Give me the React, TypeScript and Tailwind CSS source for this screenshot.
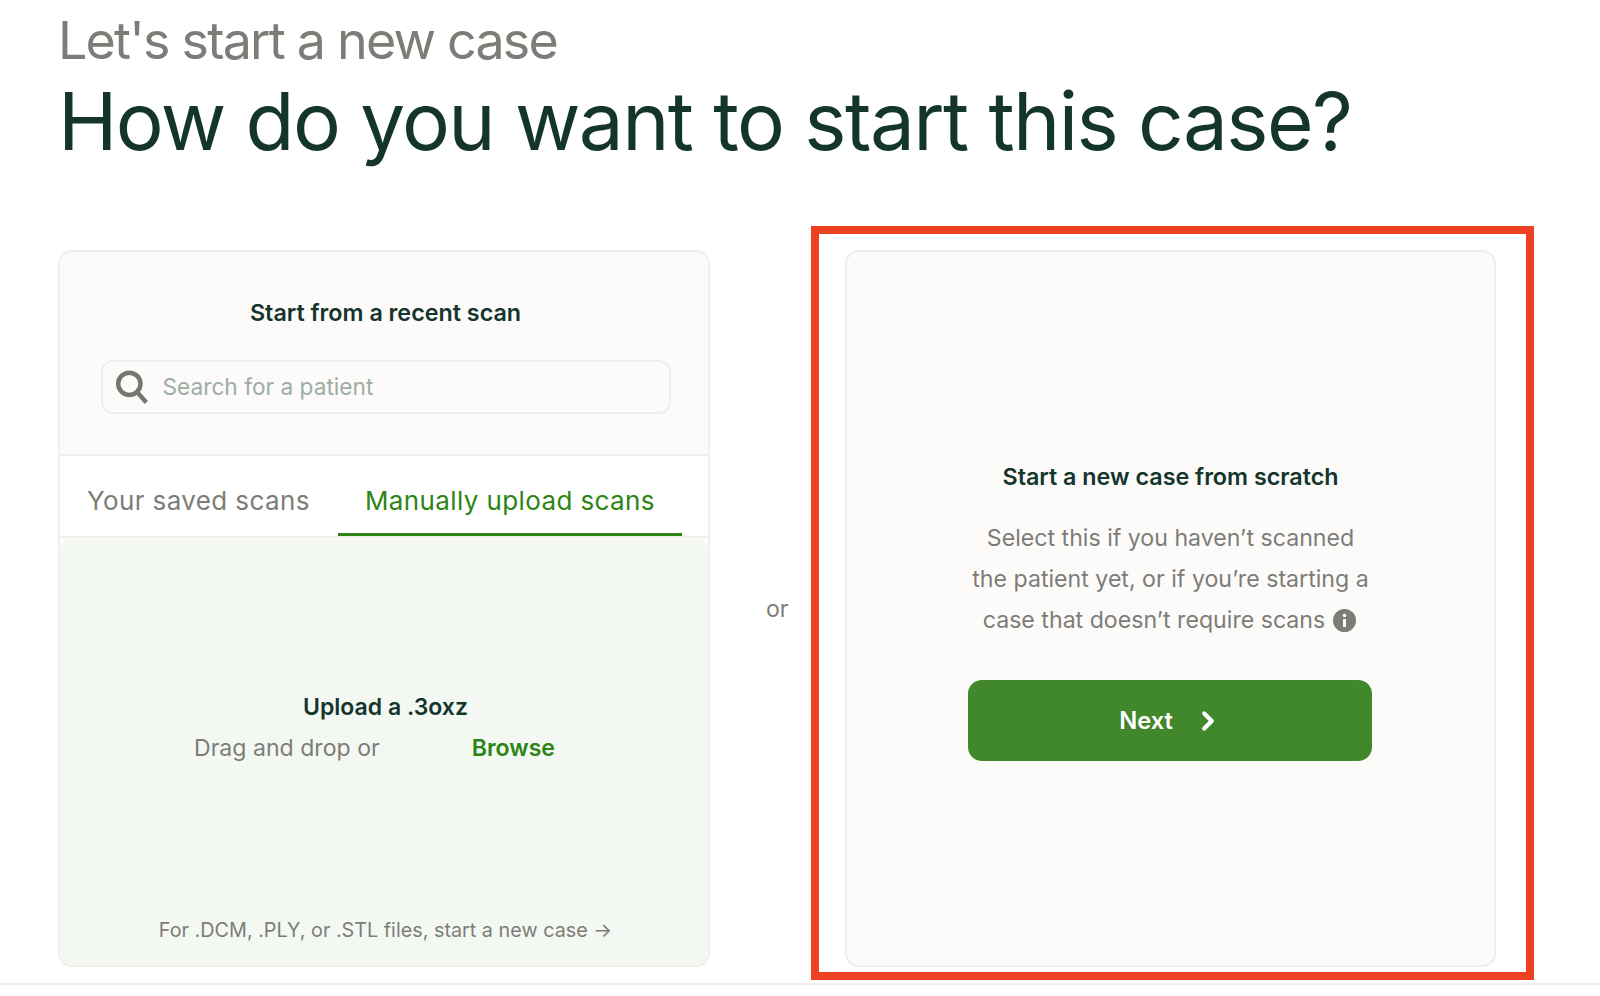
import React from "react";
import { ChevronRight } from "lucide-react";

const inter = "font-['Inter',sans-serif]";

export default function App() {
  return (
    <div className={`w-[1600px] h-[996px] bg-white overflow-hidden flex flex-col ${inter}`}>
      <div className="h-[983px] pl-[58px] flex flex-col">
        <h2 className="h-[76px] pt-[10px] text-[52px] leading-[62px] tracking-[-1.8px] text-[#7d7d78] font-normal whitespace-nowrap">
          Let's start a new case
        </h2>
        <h1 className="h-[91px] text-[80px] leading-[89px] tracking-[-1.6px] text-[#14352c] font-normal whitespace-nowrap">
          How do you want to start this case?
        </h1>
        <div className="flex items-start mt-[83px]">
          <div className="w-[652px] h-[717px] rounded-[14px] border-2 border-[#eeeeea] bg-white overflow-hidden flex flex-col">
            <div className="h-[204px] bg-[#fcfbfa] border-b-2 border-[#eeeeea] flex flex-col items-center shrink-0">
              <div className="mt-[45px] ml-[3px] text-[23.3px] leading-[32px] font-semibold text-[#14352c] whitespace-nowrap">Start from a recent scan</div>
              <div className="mt-[31px] ml-[3px] w-[570px] h-[54px] rounded-[12px] border-2 border-[#eeeeea] flex items-center pl-[12px]">
                <svg width="34" height="34" viewBox="0 0 32 32" fill="none" stroke="#76766f" strokeWidth="4.2">
                  <circle cx="13.5" cy="13" r="10.5" />
                  <path d="M20.5 20.5 L29.5 30.5" />
                </svg>
                <span className="ml-[14px] mt-[1px] text-[22.7px] text-[#9dada5] whitespace-nowrap">Search for a patient</span>
              </div>
            </div>
            <div className="h-[82px] border-b-2 border-[#eeeeea] flex pl-[27px] shrink-0">
              <div className="w-[251px] pt-[27px] text-[26px] leading-[36px] tracking-[0.38px] text-[#7d7d78] whitespace-nowrap">Your saved scans</div>
              <div className="w-[344px] h-[80px] pt-[27px] pl-[27px] text-[26px] leading-[36px] tracking-[0.38px] text-[#2c8515] border-b-[3px] border-[#2c8515] whitespace-nowrap">Manually upload scans</div>
            </div>
            <div className="flex-1 mt-[1px] bg-[#f4f8f3] rounded-t-[10px] flex flex-col items-center">
              <div className="mt-[151px] ml-[3px] text-[23px] leading-[34px] font-semibold text-[#14352c]">Upload a .3oxz</div>
              <div className="mt-[7px] mr-[19px] flex text-[23.1px] leading-[34px] whitespace-nowrap">
                <span className="text-[#7d7d78]">Drag and drop or</span>
                <span className="ml-[92px] font-semibold text-[#2c8515]">Browse</span>
              </div>
              <div className="mt-auto mb-[21px] ml-[3px] text-[19.8px] leading-[28px] text-[#7d7d78] whitespace-nowrap">For .DCM, .PLY, or .STL files, start a new case →</div>
            </div>
          </div>
          <div className="w-[101px] h-[717px] flex items-center">
            <span className="ml-[56px] mt-[1px] text-[23.1px] text-[#7d7d78]">or</span>
          </div>
          <div className="mt-[-24px] w-[723px] h-[754px] border-8 border-[#ee4023] pl-[26px] pt-[16px]">
            <div className="w-[651px] h-[717px] rounded-[14px] border-2 border-[#eeeeea] bg-[#fcfbfa] flex flex-col items-center">
              <div className="mt-[209px] text-[23.3px] leading-[32px] font-semibold text-[#14352c] whitespace-nowrap">Start a new case from scratch</div>
              <div className="mt-[25px] text-center text-[23.15px] leading-[41px] text-[#7d7d78] whitespace-nowrap">
                <div>Select this if you haven’t scanned</div>
                <div>the patient yet, or if you’re starting a</div>
                <div className="flex items-center justify-center mr-[2px]">
                  case that doesn’t require scans
                  <svg className="ml-[8px]" width="23" height="23" viewBox="0 0 23 23">
                    <circle cx="11.5" cy="11.5" r="11.5" fill="#7d7d78" />
                    <circle cx="11.5" cy="6.5" r="1.8" fill="#fff" />
                    <rect x="10" y="10" width="3" height="8" rx="0.6" fill="#fff" />
                  </svg>
                </div>
              </div>
              <button className="mt-[39px] mr-[2px] w-[404px] h-[81px] rounded-[14px] bg-[#41872c] flex items-center justify-center text-white text-[23.7px] font-semibold">
                <span className="ml-[3px]">Next</span>
                <ChevronRight className="ml-[20px]" size={30} strokeWidth={3.4} />
              </button>
            </div>
          </div>
        </div>
      </div>
      <div className="h-[2px] bg-[#eeeeea]" />
    </div>
  );
}
